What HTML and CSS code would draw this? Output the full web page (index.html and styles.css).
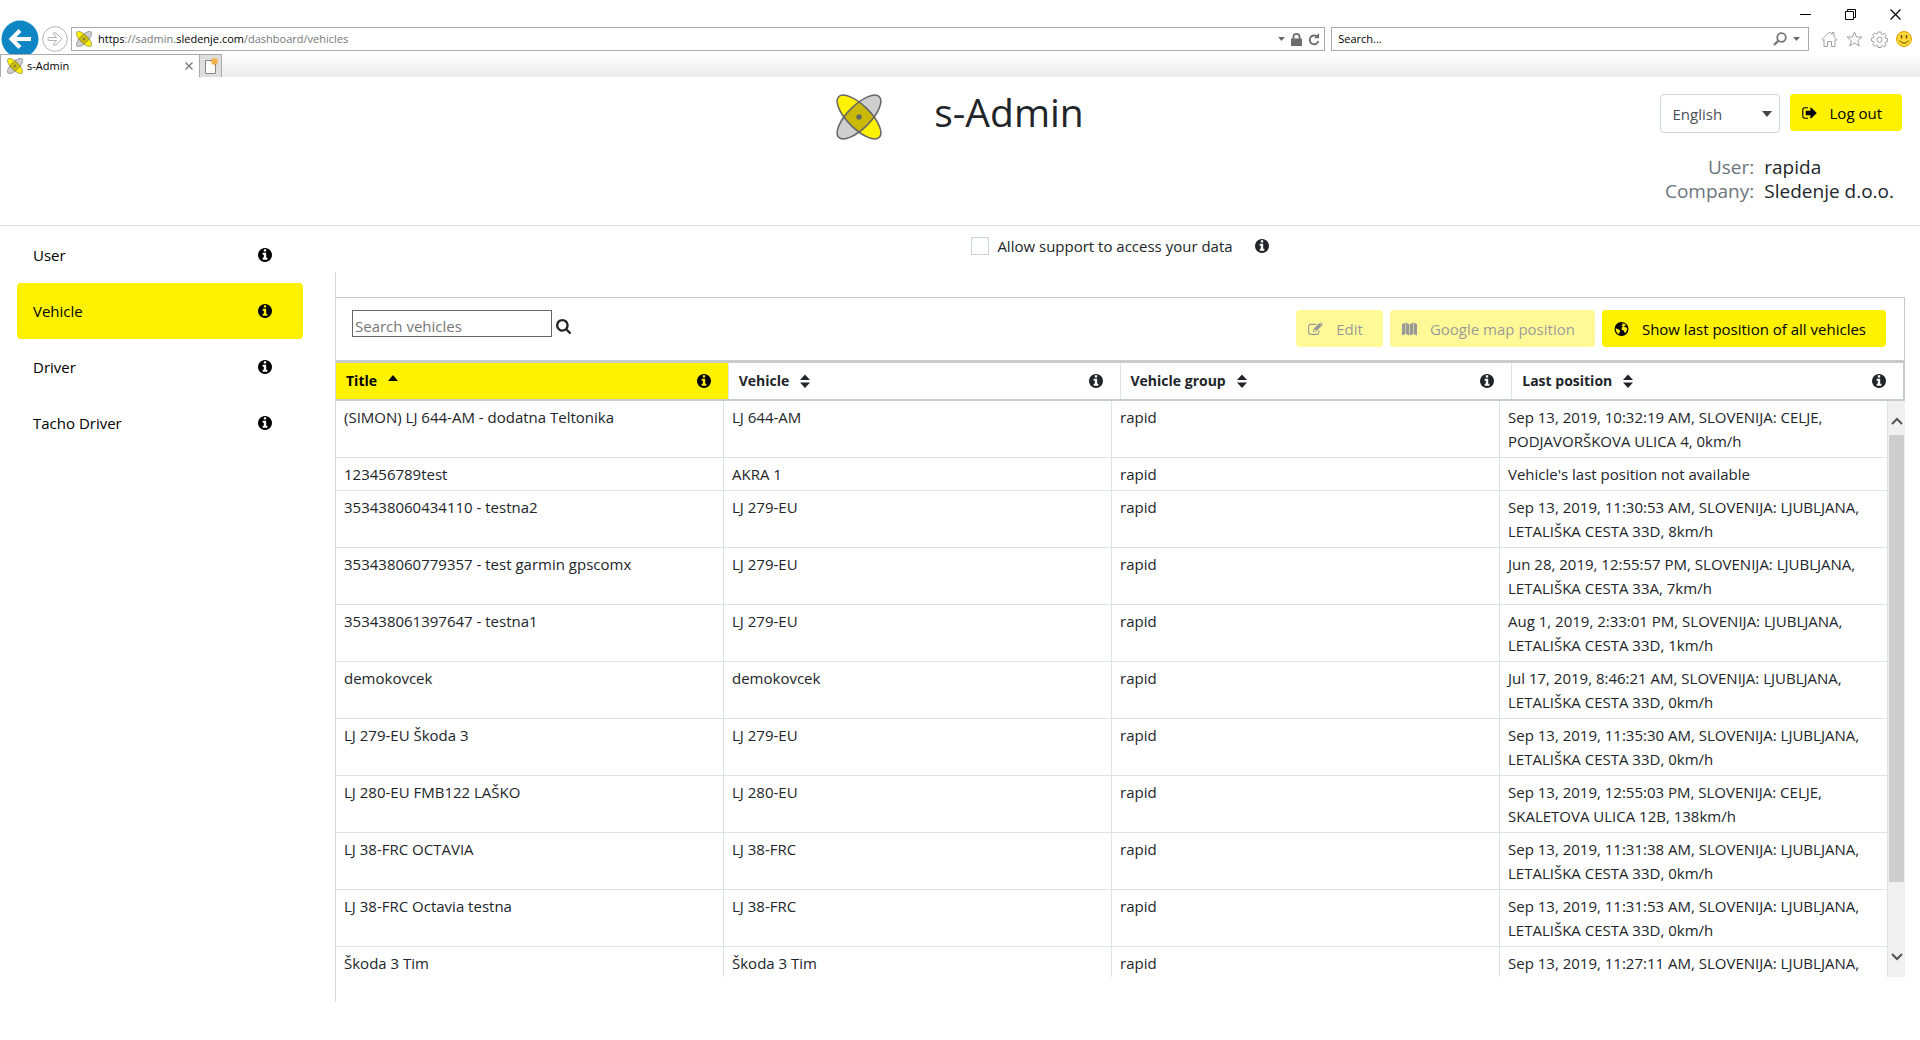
FILE: index.html
```html
<!DOCTYPE html>
<html lang="en">
<head>
<meta charset="utf-8">
<meta name="viewport" content="width=device-width, initial-scale=1">
<title>s-Admin</title>
<link rel="stylesheet" href="styles.css">
</head>
<body>
<svg class="sprite" aria-hidden="true">
  <symbol id="logo" viewBox="0 0 48 48">
    <ellipse cx="24" cy="24" rx="30" ry="12" transform="rotate(-45 24 24)" fill="#cfcfcf"/>
    <ellipse cx="24" cy="24" rx="30" ry="12" transform="rotate(45 24 24)" fill="#fff200"/>
    <clipPath id="lens"><ellipse cx="24" cy="24" rx="30" ry="12" transform="rotate(45 24 24)"/></clipPath>
    <g clip-path="url(#lens)"><ellipse cx="24" cy="24" rx="30" ry="12" transform="rotate(-45 24 24)" fill="#c9ba0a"/></g>
    <g fill="none" stroke="#666" stroke-width="1.6">
      <ellipse cx="24" cy="24" rx="30" ry="12" transform="rotate(-45 24 24)"/>
      <ellipse cx="24" cy="24" rx="30" ry="12" transform="rotate(45 24 24)"/>
    </g>
    <circle cx="24" cy="24" r="2.8" fill="#666"/>
  </symbol>
  <symbol id="info" viewBox="128 128 1536 1536"><path d="M1152 1376v-160q0-14-9-23t-23-9h-96v-512q0-14-9-23t-23-9h-320q-14 0-23 9t-9 23v160q0 14 9 23t23 9h96v320h-96q-14 0-23 9t-9 23v160q0 14 9 23t23 9h448q14 0 23-9t9-23zm-128-896v-192q0-14-9-23t-23-9h-192q-14 0-23 9t-9 23v192q0 14 9 23t23 9h192q14 0 23-9t9-23zm640 416q0 209-103 385.5t-279.5 279.5-385.5 103-385.5-103-279.5-279.5-103-385.5 103-385.5 279.5-279.5 385.5-103 385.5 103 279.5 279.5 103 385.5z"/></symbol>
  <symbol id="search" viewBox="64 128 1664 1664"><path d="M1216 832q0-185-131.5-316.5t-316.5-131.5-316.5 131.5-131.5 316.5 131.5 316.5 316.5 131.5 316.5-131.5 131.5-316.5zm512 832q0 52-38 90t-90 38q-54 0-90-38l-343-342q-179 124-399 124-143 0-273.5-55.5t-225-150-150-225-55.5-273.5 55.5-273.5 150-225 225-150 273.5-55.5 273.5 55.5 225 150 150 225 55.5 273.5q0 220-124 399l343 343q37 37 37 90z"/></symbol>
  <symbol id="signout" viewBox="64 128 1600 1536"><path d="M704 1440q0 4 1 20t.5 26.5-3 23.5-10 19.5-20.5 6.5h-320q-119 0-203.5-84.5t-84.5-203.5v-704q0-119 84.5-203.5t203.5-84.5h320q13 0 22.5 9.5t9.500 22.500q0 4 1 20t.5 26.500-3 23.500-10 19.500-20.500 6.500h-320q-66 0-113 47t-47 113v704q0 66 47 113t113 47h312l11.500 1 11.500 3 8 5.500 7 9 2 13.500zm928-544q0 26-19 45l-544 544q-19 19-45 19t-45-19-19-45v-288h-448q-26 0-45-19t-19-45v-384q0-26 19-45t45-19h448v-288q0-26 19-45t45-19 45 19l544 544q19 19 19 45z"/></symbol>
  <symbol id="edit" viewBox="0 0 16 14"><path d="M11.500 8.500v2.200a2 2 0 0 1-2 2h-6.800a2 2 0 0 1-2-2V4a2 2 0 0 1 2-2h6" fill="none" stroke="currentColor" stroke-width="1.2"/><path fill-rule="evenodd" d="M5.400 7.200 12 .6l2.800 2.800-6.600 6.600H5.400zM12.600 0h1.400l1.700 1.700v1l-.5.500zM6.300 7.700v1.400h1.500l.6-.6-1.500-1.500z"/></symbol>
  <symbol id="map" viewBox="0 0 16 14"><path d="M0 1.800 3.600 0v12.200L0 14zM4.200 0l3.500 1.800V14l-3.500-1.800zM8.300 1.800 11.800 0v12.200L8.300 14zM12.400 0 16 1.800V14l-3.600-1.800z"/></symbol>
  <symbol id="globe" viewBox="0 0 14 14"><circle cx="7" cy="7" r="7"/><path d="M7.400 1.200 10 1.700l1.800 1.600-1.700.4-.4 1.200 2.500.7.600 1.600-1.200 2.700-1.200 1.400-1-2.600L7 7.400 7.300 5.500 8.600 4.500 7 3.400 8.200 2.300zM1.200 6l1.600 1 1.800.6 1.200 1.800-1.200 1.400-.1 1.500C2.600 11.300 1 9.300 1.200 6z" fill="#fff200"/></symbol>
  <symbol id="sort" viewBox="0 0 10 14"><path d="M0 6 5 .5 10 6zM0 8.500h10L5 14z"/></symbol>
  <symbol id="up" viewBox="0 0 10 6"><path d="M0 6 5 0l5 6z"/></symbol>
  <symbol id="down" viewBox="0 0 10 6"><path d="M0 0h10L5 6z"/></symbol>
</svg>

<div class="browser">
  <div class="titlebar">
    <button class="win" aria-label="Minimize"><svg class="line" width="11" height="11" viewBox="0 0 11 11"><path d="M0 5.500h11"/></svg></button>
    <button class="win" aria-label="Restore"><svg class="line" width="11" height="11" viewBox="0 0 11 11"><path d="M.5 2.500h8v8h-8zM2.500 2.500v-2h8v8h-2"/></svg></button>
    <button class="win" aria-label="Close"><svg class="line" width="11" height="11" viewBox="0 0 11 11"><path d="m.5.5 10 10m0-10-10 10" stroke-width="1.2"/></svg></button>
  </div>
  <div class="navbar">
    <button class="back" aria-label="Back"><svg width="38" height="38" viewBox="0 0 38 38"><circle cx="19" cy="19" r="18.500" fill="#0e86c4"/><path d="M30 19H11m8-8.500L10.500 19l8.500 8.500" fill="none" stroke="#fff" stroke-width="4"/></svg></button>
    <button class="forward" aria-label="Forward"><svg class="line" width="26" height="26" viewBox="0 0 26 26"><circle cx="13" cy="13" r="12.300"/><path d="M6 11.500h8.500L11 7h3l6 6-6 6h-3l3.500-4.500H6z"/></svg></button>
    <div class="address">
      <svg class="favicon"><use href="#logo"/></svg>
      <span class="url"><b>https</b>://sadmin.<b>sledenje.com</b>/dashboard/vehicles</span>
      <svg class="chev"><use href="#down"/></svg>
      <svg width="11" height="13" viewBox="0 0 11 13"><path d="M0 5.500h11V13H0z" fill="#6d6d6d"/><path d="M2.500 6V3.500a3 2.600 0 0 1 6 0V6" fill="none" stroke="#6d6d6d" stroke-width="1.8"/></svg>
      <svg width="12" height="13" viewBox="0 0 12 13"><path d="M9 3.500A4.400 4.400 0 1 0 10.400 8" fill="none" stroke="#6d6d6d" stroke-width="1.8"/><path d="M6 5.300h5V0z" fill="#6d6d6d"/></svg>
    </div>
    <div class="websearch">
      <input type="text" placeholder="Search..." aria-label="Search the web">
      <svg width="14" height="14" viewBox="0 0 14 14"><circle cx="8.500" cy="5.500" r="4.300" fill="none" stroke="#777" stroke-width="1.8"/><path d="M5.500 8.500 1 13" stroke="#777" stroke-width="2.4"/></svg>
      <svg class="chev"><use href="#down"/></svg>
    </div>
    <div class="tools">
      <svg class="line" width="17" height="16" viewBox="0 0 17 16"><path d="M1 8.500 8.500 1 11 3.500V1.500h2v4l3 3-1 1-1-1v7h-3.500v-5h-4v5H3v-7l-1 1z"/></svg>
      <svg class="line" width="17" height="16" viewBox="0 0 17 16"><path d="m8.500 1 2 5h5.500l-4.300 3.500 1.600 5.500-4.800-3.200L3.700 15l1.600-5.500L1 6h5.500z"/></svg>
      <svg class="line" width="17" height="17" viewBox="0 0 17 17"><path d="M7 1h3l.4 2.200 1 .5L13.300 2.400l2 2-1.300 1.900.4 1 2.100.4v2.900l-2.100.4-.5 1 1.300 1.900-2 2-1.900-1.300-1 .5L10 16.500H7l-.4-2-1-.5-1.900 1.300-2-2L3 11.500l-.5-1L.5 10V7.200l2-.4.500-1-1.300-1.900 2-2 1.900 1.300 1-.5z"/><circle cx="8.500" cy="8.700" r="2.600"/></svg>
      <svg width="16" height="16" viewBox="0 0 16 16"><circle cx="8" cy="8" r="7.500" fill="#ffd836" stroke="#dca300"/><path d="M5.500 4v3.500m5-3.500v3.500" stroke="#6b4a00" stroke-width="1.4"/><path d="M3.500 9.500q4.500 5.500 9 0" fill="none" stroke="#6b4a00"/></svg>
    </div>
  </div>
  <div class="tabs">
    <div class="tab">
      <svg class="favicon"><use href="#logo"/></svg>
      <span class="tabname">s-Admin</span>
      <button class="tabclose" aria-label="Close tab"><svg width="8" height="8" viewBox="0 0 8 8"><path d="m.5.5 7 7m0-7-7 7" stroke="#777" stroke-width="1.3"/></svg></button>
    </div>
    <button class="newtab" aria-label="New tab"><svg width="16" height="18" viewBox="0 0 16 18"><path d="M2.500 3.500h10v13h-10z" fill="#fff" stroke="#888"/><path d="m11.500 0 1 2 2.300-.8-.8 2.200 2 1.100-2 1 .8 2.300-2.300-.8-1 2-1-2-2.300.8.800-2.300-2-1 2-1.100-.8-2.200 2.300.8z" fill="#f2b34a"/></svg></button>
  </div>
</div>

<header class="header">
  <div class="brand">
    <svg class="logo" role="img" aria-label="Sledenje logo"><use href="#logo"/></svg>
    <h1>s-Admin</h1>
  </div>
  <div class="account">
    <div class="actions">
      <div class="lang">
        <select aria-label="Language"><option>English</option></select>
        <svg class="caret"><use href="#down"/></svg>
      </div>
      <button class="btn"><svg class="icon"><use href="#signout"/></svg>Log out</button>
    </div>
    <dl class="who">
      <dt>User:</dt><dd>rapida</dd>
      <dt>Company:</dt><dd>Sledenje d.o.o.</dd>
    </dl>
  </div>
</header>

<div class="layout">
  <nav class="side">
    <a href="#user">User<svg class="info"><use href="#info"/></svg></a>
    <a href="#vehicle" class="active">Vehicle<svg class="info"><use href="#info"/></svg></a>
    <a href="#driver">Driver<svg class="info"><use href="#info"/></svg></a>
    <a href="#tacho">Tacho Driver<svg class="info"><use href="#info"/></svg></a>
  </nav>
  <main class="main">
    <div class="support">
      <input type="checkbox" id="allow"><label for="allow">Allow support to access your data</label>
      <svg class="info"><use href="#info"/></svg>
    </div>
    <section class="content">
      <div class="toolbar">
        <div class="find">
          <input type="text" placeholder="Search vehicles" aria-label="Search vehicles">
          <svg class="glass"><use href="#search"/></svg>
        </div>
        <div class="buttons">
          <button class="btn" disabled><svg class="icon"><use href="#edit"/></svg>Edit</button>
          <button class="btn" disabled><svg class="icon"><use href="#map"/></svg>Google map position</button>
          <button class="btn"><svg class="icon"><use href="#globe"/></svg>Show last position of all vehicles</button>
        </div>
      </div>
      <table class="grid head">
        <thead><tr>
          <th class="sorted"><div class="th">Title<svg class="asc"><use href="#up"/></svg><svg class="info"><use href="#info"/></svg></div></th>
          <th><div class="th">Vehicle<svg class="sort"><use href="#sort"/></svg><svg class="info"><use href="#info"/></svg></div></th>
          <th><div class="th">Vehicle group<svg class="sort"><use href="#sort"/></svg><svg class="info"><use href="#info"/></svg></div></th>
          <th><div class="th">Last position<svg class="sort"><use href="#sort"/></svg><svg class="info"><use href="#info"/></svg></div></th>
        </tr></thead>
      </table>
      <div class="scroller">
        <div class="rows">
          <table class="grid body">
            <tbody>
              <tr><td>(SIMON) LJ 644-AM - dodatna Teltonika</td><td>LJ 644-AM</td><td>rapid</td><td>Sep 13, 2019, 10:32:19 AM, SLOVENIJA: CELJE,<br>PODJAVORŠKOVA ULICA 4, 0km/h</td></tr>
              <tr><td>123456789test</td><td>AKRA 1</td><td>rapid</td><td>Vehicle's last position not available</td></tr>
              <tr><td>353438060434110 - testna2</td><td>LJ 279-EU</td><td>rapid</td><td>Sep 13, 2019, 11:30:53 AM, SLOVENIJA: LJUBLJANA,<br>LETALIŠKA CESTA 33D, 8km/h</td></tr>
              <tr><td>353438060779357 - test garmin gpscomx</td><td>LJ 279-EU</td><td>rapid</td><td>Jun 28, 2019, 12:55:57 PM, SLOVENIJA: LJUBLJANA,<br>LETALIŠKA CESTA 33A, 7km/h</td></tr>
              <tr><td>353438061397647 - testna1</td><td>LJ 279-EU</td><td>rapid</td><td>Aug 1, 2019, 2:33:01 PM, SLOVENIJA: LJUBLJANA,<br>LETALIŠKA CESTA 33D, 1km/h</td></tr>
              <tr><td>demokovcek</td><td>demokovcek</td><td>rapid</td><td>Jul 17, 2019, 8:46:21 AM, SLOVENIJA: LJUBLJANA,<br>LETALIŠKA CESTA 33D, 0km/h</td></tr>
              <tr><td>LJ 279-EU Škoda 3</td><td>LJ 279-EU</td><td>rapid</td><td>Sep 13, 2019, 11:35:30 AM, SLOVENIJA: LJUBLJANA,<br>LETALIŠKA CESTA 33D, 0km/h</td></tr>
              <tr><td>LJ 280-EU FMB122 LAŠKO</td><td>LJ 280-EU</td><td>rapid</td><td>Sep 13, 2019, 12:55:03 PM, SLOVENIJA: CELJE,<br>SKALETOVA ULICA 12B, 138km/h</td></tr>
              <tr><td>LJ 38-FRC OCTAVIA</td><td>LJ 38-FRC</td><td>rapid</td><td>Sep 13, 2019, 11:31:38 AM, SLOVENIJA: LJUBLJANA,<br>LETALIŠKA CESTA 33D, 0km/h</td></tr>
              <tr><td>LJ 38-FRC Octavia testna</td><td>LJ 38-FRC</td><td>rapid</td><td>Sep 13, 2019, 11:31:53 AM, SLOVENIJA: LJUBLJANA,<br>LETALIŠKA CESTA 33D, 0km/h</td></tr>
              <tr><td>Škoda 3 Tim</td><td>Škoda 3 Tim</td><td>rapid</td><td>Sep 13, 2019, 11:27:11 AM, SLOVENIJA: LJUBLJANA,</td></tr>
            </tbody>
          </table>
        </div>
        <div class="bar" aria-hidden="true">
          <svg class="arrow" viewBox="0 0 12 8"><path d="m1 7 5-5 5 5"/></svg>
          <div class="track"><div class="thumb"></div></div>
          <svg class="arrow" viewBox="0 0 12 8"><path d="m1 1 5 5 5-5"/></svg>
        </div>
      </div>
    </section>
  </main>
</div>
</body>
</html>
```
FILE: styles.css
```css
* { box-sizing: border-box; }

body {
  margin: 0;
  height: 100vh;
  display: flex;
  flex-direction: column;
  overflow: hidden;
  background: #fff;
  color: #212529;
  font: 15px/24px "Open Sans", "Noto Sans", sans-serif;
}

button, input, select { font: inherit; color: inherit; }
button { padding: 0; border: 0; background: none; }
svg { display: block; flex: none; fill: currentColor; }
.line { fill: none; stroke: currentColor; }
.sprite { position: absolute; width: 0; height: 0; }
.info { width: 14px; height: 14px; }

/* Browser window */
.browser { flex: none; color: #000; font-size: 11px; line-height: 16px; }
.titlebar {
  display: flex;
  justify-content: flex-end;
  align-items: flex-end;
  gap: 34px;
  height: 20px;
  padding-right: 19px;
}
.navbar { display: flex; align-items: center; height: 34px; padding: 4px 8px 0 1px; }
.back { width: 38px; height: 38px; }
.forward { width: 26px; height: 26px; margin: 0 3px; color: #b4b4b4; }
.address, .websearch {
  display: flex;
  align-items: center;
  gap: 6px;
  height: 24px;
  padding: 0 4px;
  border: 1px solid #a9a9a9;
  background: #fff;
}
.address { flex: 1; }
.websearch { width: 25%; margin: 0 12px 0 6px; padding-right: 8px; }
.websearch input { flex: 1; min-width: 0; padding: 0 2px; border: 0; outline: 0; background: none; }
.websearch input::placeholder { color: #000; opacity: 1; }
.url { flex: 1; color: #777; }
.url b { color: #000; font-weight: 400; }
.favicon { width: 16px; height: 16px; }
.chev { width: 7px; height: 4px; color: #666; }
.tools { display: flex; align-items: center; gap: 8px; color: #a0a0a0; }
.tabs { display: flex; height: 23px; background: linear-gradient(#fff, #ebebeb); }
.tab {
  display: flex;
  align-items: center;
  gap: 4px;
  width: 199px;
  padding: 0 6px;
  border: solid #a9a9a9;
  border-width: 1px 0 0 1px;
  background: #fff;
}
.tabname { flex: 1; }
.newtab {
  display: flex;
  align-items: center;
  justify-content: center;
  width: 23px;
  border: 1px solid #a9a9a9;
  border-bottom: 0;
  background: #dedede;
}

/* Page header */
.header {
  display: grid;
  grid-template-columns: 1fr auto 1fr;
  flex: none;
  height: 149px;
  padding: 17px 18px 0;
  border-bottom: 1px solid #dee2e6;
}
.brand { grid-column: 2; display: flex; align-items: flex-start; gap: 52px; }
.logo { width: 46px; height: 46px; }
h1 { margin: 0; font-size: 39px; line-height: 36px; font-weight: 400; }
.account { display: flex; flex-direction: column; align-items: flex-end; }
.actions { display: flex; gap: 10px; }
.lang { position: relative; width: 120px; }
.lang select {
  width: 100%;
  height: 39px;
  padding: 0 12px;
  appearance: none;
  border: 1px solid #ced4da;
  border-radius: 4px;
  background: #fff;
  color: #495057;
}
.caret { position: absolute; right: 8px; top: 17px; width: 10px; height: 6px; color: #444; pointer-events: none; }
.who {
  display: grid;
  grid-template-columns: auto auto;
  column-gap: 10px;
  margin: 22px 8px 0 0;
  font-size: 19px;
}
.who dt { text-align: right; color: #6c757d; }
.who dd { margin: 0; }

.btn {
  display: flex;
  align-items: center;
  gap: 13px;
  height: 37px;
  padding: 0 20px 0 12px;
  border-radius: 4px;
  background: #fff200;
  color: #000;
  white-space: nowrap;
}
.btn:disabled { opacity: .4; }
.icon { width: 15px; height: 14px; }

/* Body */
.layout { display: flex; flex: 1; min-height: 0; }
.side { flex: none; width: 335px; padding: 1px 32px 0 17px; }
.side a {
  display: flex;
  align-items: center;
  justify-content: space-between;
  height: 56px;
  padding: 0 31px 0 16px;
  border-radius: 4px;
  color: #000;
  text-decoration: none;
}
.side .active { background: #fff200; }
.main { display: flex; flex: 1; flex-direction: column; min-width: 0; padding: 0 15px 38px 0; }
.support { display: flex; align-items: center; justify-content: center; height: 46px; padding: 0 0 7px; }
.support input {
  appearance: none;
  width: 18px;
  height: 18px;
  margin: 0 8px 0 0;
  border: 1px solid #ced4da;
  background: #fff;
}
.support .info { margin-left: 22px; }
.content {
  display: flex;
  flex: 1;
  flex-direction: column;
  min-height: 0;
  padding: 25px 0 25px;
  border-left: 1px solid #d5d8db;
}
.toolbar {
  display: flex;
  justify-content: space-between;
  height: 63px;
  padding: 12px 18px 0 16px;
  border: solid #c8cbce;
  border-width: 1px 1px 0 0;
}
.find { display: flex; gap: 4px; }
.find input { width: 200px; height: 27px; padding: 5px 2px 0; border: 1px solid #666; border-radius: 0; }
.find input::placeholder { color: #777; opacity: 1; }
.glass { width: 15px; height: 15px; margin-top: 9px; }
.buttons { display: flex; gap: 7px; }

.grid { width: 100%; table-layout: fixed; border-collapse: separate; border-spacing: 0; }
.head { flex: none; border: solid #c8cbce; border-width: 3px 2px 2px 0; }
.head th { height: 36px; padding: 0; text-align: left; }
.head th + th { border-left: 1px solid #dee2e6; }
.sorted { background: #fff200; color: #000; }
.th { display: flex; align-items: center; gap: 11px; padding: 0 17px 0 10px; font-size: 14px; }
.th .info { margin-left: auto; }
.sort { width: 10px; height: 14px; }
.asc { width: 10px; height: 6px; margin-bottom: 6px; }
.scroller { display: flex; flex: 1; min-height: 0; }
.rows { flex: 1; overflow: hidden; }
.body td {
  padding: 4px 8px;
  vertical-align: top;
  border: solid #dee2e6;
  border-width: 0 1px 1px 0;
  white-space: nowrap;
}
.bar { display: flex; flex-direction: column; align-items: center; width: 17px; padding: 16px 0; background: #f0f0f0; }
.arrow { width: 12px; height: 8px; fill: none; stroke: #555; stroke-width: 2; }
.track { align-self: stretch; flex: 1; margin: 10px 1px; }
.thumb { height: 88%; background: #cdcdcd; }
```
